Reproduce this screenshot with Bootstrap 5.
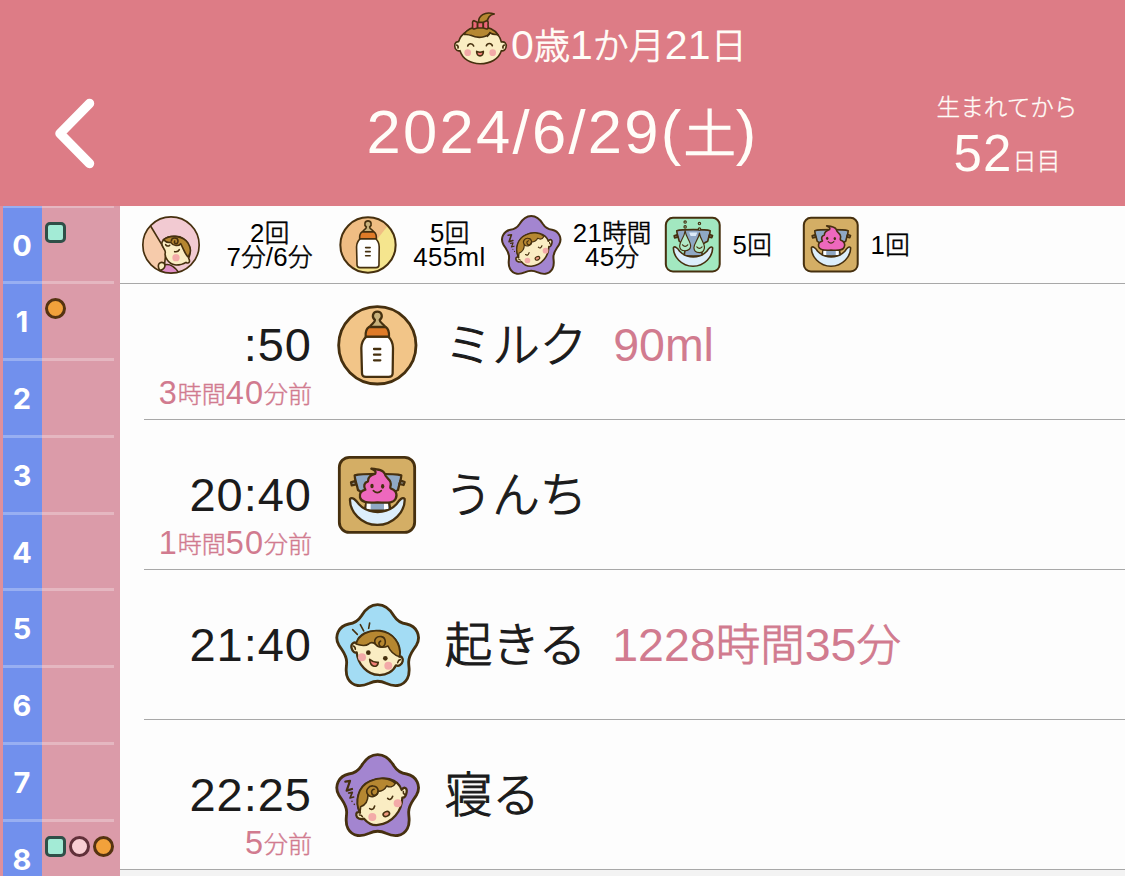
<!DOCTYPE html>
<html lang="ja">
<head>
<meta charset="utf-8">
<meta name="viewport" content="width=device-width, initial-scale=1">
<title>育児記録</title>
<link href="https://cdn.jsdelivr.net/npm/bootstrap@5.3.0/dist/css/bootstrap.min.css" rel="stylesheet">
<style>
  body{font-family:"Liberation Sans","Noto Sans CJK JP",sans-serif;font-weight:400;background:#f3f3f3;color:#1b1b1b;height:876px;overflow:hidden}
  .jp{font-family:"Noto Sans CJK JP",sans-serif;font-weight:300;line-height:0;letter-spacing:0;-webkit-text-stroke:.5px currentColor}
  .topbar{height:206px;background:#dd7c86;color:#fffdf8;z-index:2}
  .age-row{height:80px;padding:10px 0 0 74px}
  .age{font-size:41px;line-height:46px;letter-spacing:.1px;padding-top:12px;margin-left:2px}
  .age .jp{font-size:36px;-webkit-text-stroke-width:.8px}
  .date-row{display:grid;grid-template-columns:236px 1fr 236px;height:126px}
  .back{padding:17px 0 0 53px}
  .day{font-size:61.5px;line-height:62px;letter-spacing:2.3px;padding-top:21px}
  .day .jp{font-size:52px;-webkit-text-stroke-width:1.5px}
  .born{font-size:23.6px;line-height:26px;padding-top:13px}
  .born .jp{line-height:26px;-webkit-text-stroke-width:.3px}
  .born-days{font-size:51px;line-height:52px;letter-spacing:1.2px;margin-top:7px}
  .born-days .jp{font-size:24px;-webkit-text-stroke-width:.3px;position:relative;top:-1px}
  .body-row{height:670px}
  .rail{width:120px;background:#db9ba9;border-left:3px solid #df909c;overflow:hidden}
  .rail-in{margin-top:-1.5px}
  .hour{height:76.75px;background:linear-gradient(90deg,#7190ed 39px,transparent 39px)}
  .hour::before{content:"";display:block;width:111px;height:3px;background:rgba(255,255,255,.28)}
  .hour-num{width:38px;font:700 29px/76px Inter,sans-serif;color:#fff}
  .dots{padding:14px 0 0 4px;gap:3px}
  .mk{width:21px;height:21px;border:3px solid;border-radius:50%}
  .mk-g{background:#a3ebd6;border-color:#2f4f48;border-radius:5px}
  .mk-o{background:#f2a13b;border-color:#553311}
  .mk-p{background:#f9ced3;border-color:#613039}
  .log{background:#fdfdfd;overflow:hidden;height:664px}
  .summary{height:78px;border-bottom:1px solid #a8a8a8;background:#fdfdfd;z-index:1;color:#000}
  .sum{font-size:25.8px;line-height:24px;letter-spacing:.4px}
  .sum .jp{font-size:24.5px;-webkit-text-stroke-width:.6px}
  .lead-gap{margin-left:20px}
  .w-a{width:135px}.w-b{width:101px}.w-c{width:100px}.w-d{width:56px}
  .ic{display:block;flex:none}
  .ic-l{width:86.67px;height:86.67px}
  .ic-s{width:62px;height:62px}
  .entry{height:150px;position:relative}
  .entry::after{content:"";position:absolute;left:24px;right:0;bottom:0;height:1px;background:#a8a8a8}
  .entry:last-child::after{left:0}
  .entries{margin-top:-14px}
  .time-col{width:192px;padding-top:51px}
  .time{font-size:47px;line-height:48px;letter-spacing:1px}
  .ago{font-size:32.5px;line-height:33px;margin-top:8px;color:#d17b8f;letter-spacing:1px}
  .ago .jp{font-size:24px;-webkit-text-stroke-width:.4px;position:relative;top:-1px}
  .entry .ic{margin:32px 0 0 22px}
  .what{font-size:47.5px;line-height:48px;padding-top:52px;margin-left:24px}
  .what .jp{-webkit-text-stroke-width:1.1px}
  .amt{font-size:46.5px;line-height:48px;padding-top:51px;margin-left:26px;color:#d17b8f}
  .amt .jp{font-size:44.5px;-webkit-text-stroke-width:.9px}
  .o,.m{stroke:#46300f;stroke-width:8.5;stroke-linejoin:round;stroke-linecap:round}
  .m{stroke-width:6.8}
  .t{stroke:#46300f;stroke-width:4.8;stroke-linejoin:round;stroke-linecap:round}
  .nf{fill:none}
</style>
</head>
<body>
<svg width="0" height="0" class="position-absolute" aria-hidden="true">
  <defs>
    <path id="starShape" d="M145 28C170 28 184 45 194 62C204 78 216 84 232 86C262 92 276 122 262 148C250 168 238 178 238 200C238 218 244 232 234 250C220 276 192 274 170 264C152 255 138 255 120 264C98 274 70 276 56 250C46 232 52 218 52 200C52 178 40 168 28 148C14 122 28 92 58 86C74 84 86 78 96 62C106 45 120 28 145 28Z"/>
    <g id="bottleShape">
      <path class="m" fill="#c9b27c" d="M121 96C123 86 137 84 137 74C126 66 130 49 144 49C158 49 162 66 151 74C151 84 166 86 168 96Z"/>
      <path class="m" fill="#fff" d="M111 124C100 134 96 143 96 158L98 234C98 242 102 245 110 245H178C186 245 190 242 190 234L191 158C191 143 187 134 177 124Z"/>
      <path class="m" fill="#e07b28" d="M119 95H169C178 101 180 110 179 124H109C108 110 110 101 119 95Z"/>
      <path class="m nf" d="M134 161H153M134 178H153M134 195H153"/>
    </g>
    <symbol id="bottle" viewBox="14 20 260 260">
      <circle cx="144" cy="150" r="116" fill="#f2c588"/>
      <circle class="o nf" cx="144" cy="150" r="116"/><use href="#bottleShape"/>
    </symbol>
    <symbol id="bottleTwo" viewBox="14 20 260 260">
      <circle cx="144" cy="150" r="116" fill="#f0bd83"/>
      <path d="M228 68A117 117 0 0 1 84 250Z" fill="#f5e58e"/>
      <circle class="o nf" cx="144" cy="150" r="116"/><use href="#bottleShape"/>
    </symbol>
    <g id="seat">
      <path class="m" fill="#8fa8c4" d="M76 84C96 78 196 78 216 84C216 96 210 108 206 128C190 134 182 140 178 160L184 190H106L112 160C108 142 98 136 86 128C82 108 76 98 76 84Z"/>
      <path class="m" fill="#8d8a80" d="M65 105L77 101L80 111L67 114ZM226 104L214 100L210 110L223 113Z"/>
    </g>
    <path id="bowl" class="m" fill="#dceefb" d="M62 155C68 147 80 158 88 170C118 202 172 202 202 170C210 158 220 147 226 155C228 192 192 233 144 233C96 233 60 192 62 155Z"/>
    <symbol id="poop" viewBox="14 14 260 260">
      <rect class="o" x="30" y="30" width="226" height="225" rx="30" fill="#d4ae65"/>
      <use href="#seat"/>
      <path d="M112 168H124V186H112ZM164 168H176V186H164Z" fill="#fff"/>
      <use href="#bowl"/>
      <path class="m" fill="#ee68bd" d="M126 64C148 66 162 68 166 79C168 92 182 94 184 106C186 116 180 120 184 123C198 127 206 140 199 154C194 166 180 168 144 165C110 168 96 164 92 150C90 138 96 130 108 127C102 116 104 106 116 102C116 88 124 84 138 79C142 73 136 68 126 64Z"/>
      <ellipse cx="128" cy="116" rx="5" ry="7" fill="#46300f"/><ellipse cx="160" cy="117" rx="5" ry="7" fill="#46300f"/>
      <path class="t nf" d="M132 130Q144 142 156 130"/>
    </symbol>
    <symbol id="pee" viewBox="14 14 260 260">
      <rect class="o" x="30" y="30" width="226" height="225" rx="30" fill="#a2e8c0"/>
      <use href="#seat"/>
      <path d="M128 92H162L156 106H134Z" fill="#dcebf7"/><use href="#bowl"/>
      <path class="t" fill="#b2eac6" d="M111 84C114 112 136 130 134 150C132 164 122 168 111 168C98 168 88 162 88 148C88 130 108 112 111 84ZM171 94C174 120 194 136 192 156C190 170 182 176 171 176C158 176 148 170 148 156C148 136 168 120 171 94Z"/>
      <path class="t nf" d="M100 143Q111 156 122 143M160 152Q171 164 182 152"/>
      <g class="t" fill="#a2e8c0"><circle cx="111" cy="68" r="5"/><circle cx="111" cy="48" r="5"/><circle cx="171" cy="77" r="5"/><circle cx="171" cy="54" r="5"/></g>
    </symbol>
    <symbol id="wake" viewBox="14 20 260 260">
      <use href="#starShape" class="o" fill="#a3dcf4"/>
      <path class="t nf" d="M70 103L84 117M93 88L103 107M121 83L118 99"/>
      <path class="m" fill="#faedc3" d="M82 143C72 138 63 148 67 159C70 169 76 174 82 171C86 208 114 238 148 239C172 240 192 228 200 210C208 214 218 208 220 198C222 188 216 182 210 184C218 146 190 112 152 107C118 103 88 118 82 143Z"/>
      <path class="t" fill="#b68731" d="M80 146C88 120 118 102 152 107C190 112 216 142 211 184C196 180 184 172 176 152C164 158 146 158 138 146C132 142 124 140 118 146C104 156 92 148 80 146Z"/>
      <path class="t nf" d="M138 146C132 132 142 122 156 124C170 126 172 148 160 154C150 157 144 142 154 137"/>
      <circle cx="98" cy="186" r="12" fill="#f3aaa8"/><circle cx="177" cy="211" r="12" fill="#f3aaa8"/>
      <circle cx="117" cy="172" r="7" fill="#46300f"/><circle cx="168" cy="189" r="7" fill="#46300f"/>
      <path class="t" fill="#ef7e76" d="M121 192C128 198 138 202 147 201C145 219 123 217 121 192Z"/>
      <path class="t nf" d="M72 152Q78 154 78 162M213 193Q207 194 205 202"/>
    </symbol>
    <symbol id="sleep" viewBox="14 20 260 260">
      <use href="#starShape" class="o" fill="#a385d0"/>
      <path class="m nf" d="M48 109L62 107L52 136L68 131"/><path class="t nf" d="M58 143L69 141L62 158L73 155M68 168V168M75 177V177"/>
      <path class="m" fill="#faedc3" d="M217 134C224 122 234 128 232 140C230 152 226 158 219 157C218 196 190 234 146 239C128 241 114 232 104 220C92 224 82 218 81 210C80 202 84 198 92 202C76 168 86 124 122 108C162 90 206 100 217 134Z"/>
      <path class="t" fill="#b68731" d="M92 202C76 168 86 124 122 108C150 94 182 98 198 114C192 126 180 126 172 122C164 138 152 138 146 138C142 156 124 158 116 148C116 168 106 180 94 184Z"/>
      <path class="t nf" d="M116 148C106 136 118 120 132 122C150 124 150 146 138 150C126 152 122 134 134 132"/>
      <circle cx="205" cy="174" r="12" fill="#f3aaa8"/><circle cx="129" cy="215" r="12" fill="#f3aaa8"/>
      <path class="t nf" d="M175 159Q184 168 190 153M121 190Q132 197 136 182M90 209Q96 208 99 214M222 139Q221 145 226 147"/>
      <ellipse class="t" cx="171" cy="206" rx="10" ry="7" transform="rotate(-25 171 206)" fill="#ef9a80"/>
    </symbol>
    <symbol id="nurse" viewBox="30 27 186 186">
      <clipPath id="round"><circle cx="123" cy="120" r="85"/></clipPath>
      <g clip-path="url(#round)">
        <rect x="30" y="30" width="190" height="190" fill="#f2cad2"/>
        <path class="t" fill="#f6cbab" d="M60 60L108 140L100 210H20V60Z"/>
        <path class="t" fill="#df8fc6" d="M98 182C118 172 138 186 150 210H90Z"/>
        <path class="t" fill="#faedc3" d="M98 108C88 122 106 130 106 142C102 158 118 178 138 180C152 180 162 176 168 172C176 178 182 170 176 160C184 144 178 94 136 94C116 94 104 100 98 108ZM88 194C80 178 90 168 102 174C110 186 98 198 88 194Z"/>
        <path class="t" fill="#b68731" d="M100 104C122 88 160 92 174 114C184 130 182 146 174 156C164 146 160 130 152 116C146 124 130 124 122 112C114 114 106 110 100 104Z"/>
        <path class="t nf" d="M124 108C124 96 144 96 144 108C144 120 130 118 134 108M107 119Q112 126 119 121M134 140Q144 142 148 134"/>
        <circle cx="138" cy="158" r="11" fill="#f3aaa8"/>
      </g>
      <circle class="nf" cx="123" cy="120" r="84.500" stroke="#46300f" stroke-width="5"/>
    </symbol>
    <symbol id="girl" viewBox="36 30 170 170">
      <path class="t" fill="#b68731" d="M116 68C114 48 134 32 163 42C148 44 144 54 140 68C132 76 120 76 116 68Z"/>
      <path class="t" fill="#faedc3" d="M56 125C44 124 42 136 46 146C50 152 54 154 60 152C68 178 92 191 120 191C150 191 176 178 184 152C190 154 196 150 198 142C201 130 194 124 184 126C178 98 152 84 120 84C90 84 62 100 56 125Z"/>
      <path class="t" fill="#b68731" d="M72 103C88 74 152 72 174 104C160 104 154 102 150 98C144 110 118 118 92 106C88 104 82 104 72 103Z"/>
      <path class="t nf" d="M150 98Q147 106 142 109"/>
      <path class="t" fill="#eb6578" d="M102 62Q96 62 98 74Q96 88 102 87L112 84V67ZM140 62Q146 62 144 74Q146 88 140 87L130 84V67ZM113 67H129V84H113Z"/>
      <circle cx="83" cy="158" r="10" fill="#f3aaa8"/><circle cx="158" cy="158" r="10" fill="#f3aaa8"/>
      <path class="t nf" d="M83 138C86 129 98 129 101 138M139 137C142 128 154 128 157 137M50 135Q56 138 54 144M193 135Q187 138 189 144"/>
      <path class="t" fill="#ef7e76" d="M110 154Q120 159 130 154C132 172 108 172 110 154Z"/>
    </symbol>
  </defs>
</svg>

<header class="topbar position-relative">
  <div class="age-row d-flex justify-content-center">
    <svg class="ic" width="56.7" height="56.7"><use href="#girl"/></svg>
    <div class="age text-nowrap">0<span class="jp">歳</span>1<span class="jp">か月</span>21<span class="jp">日</span></div>
  </div>
  <div class="date-row">
    <div class="back"><svg class="ic" width="44" height="74" viewBox="0 0 44 74"><path d="M36.500 6.500L7 36.500L36.500 66.500" fill="none" stroke="#fff" stroke-width="9.500" stroke-linecap="round" stroke-linejoin="round"/></svg></div>
    <div class="day text-center text-nowrap">2024/6/29(<span class="jp">土</span>)</div>
    <div class="text-center text-nowrap">
      <div class="born"><span class="jp">生まれてから</span></div>
      <div class="born-days">52<span class="jp">日目</span></div>
    </div>
  </div>
</header>

<div class="body-row d-flex">
  <aside class="rail flex-shrink-0">
    <div class="rail-in">
      <div class="hour"><div class="d-flex"><div class="hour-num text-center">0</div><div class="dots d-flex"><span class="mk mk-g"></span></div></div></div>
      <div class="hour"><div class="d-flex"><div class="hour-num text-center">1</div><div class="dots d-flex"><span class="mk mk-o"></span></div></div></div>
      <div class="hour"><div class="hour-num text-center">2</div></div>
      <div class="hour"><div class="hour-num text-center">3</div></div>
      <div class="hour"><div class="hour-num text-center">4</div></div>
      <div class="hour"><div class="hour-num text-center">5</div></div>
      <div class="hour"><div class="hour-num text-center">6</div></div>
      <div class="hour"><div class="hour-num text-center">7</div></div>
      <div class="hour"><div class="d-flex"><div class="hour-num text-center">8</div><div class="dots d-flex"><span class="mk mk-g"></span><span class="mk mk-p"></span><span class="mk mk-o"></span></div></div></div>
    </div>
  </aside>

  <main class="log flex-grow-1">
    <div class="summary position-relative d-flex align-items-center text-center text-nowrap">
      <svg class="ic ic-s lead-gap"><use href="#nurse"/></svg>
      <div class="sum w-a">2<span class="jp">回</span><br>7<span class="jp">分</span>/6<span class="jp">分</span></div>
      <svg class="ic ic-s"><use href="#bottleTwo"/></svg>
      <div class="sum w-b">5<span class="jp">回</span><br>455ml</div>
      <svg class="ic ic-s"><use href="#sleep"/></svg>
      <div class="sum w-c">21<span class="jp">時間</span><br>45<span class="jp">分</span></div>
      <svg class="ic ic-s"><use href="#pee"/></svg>
      <div class="sum w-d">5<span class="jp">回</span></div>
      <svg class="ic ic-s lead-gap"><use href="#poop"/></svg>
      <div class="sum w-d">1<span class="jp">回</span></div>
    </div>

    <div class="entries">
      <div class="entry d-flex text-nowrap">
        <div class="time-col text-end"><div class="time">:50</div><div class="ago">3<span class="jp">時間</span>40<span class="jp">分前</span></div></div>
        <svg class="ic ic-l"><use href="#bottle"/></svg>
        <div class="what"><span class="jp">ミルク</span></div><div class="amt">90ml</div>
      </div>
      <div class="entry d-flex text-nowrap">
        <div class="time-col text-end"><div class="time">20:40</div><div class="ago">1<span class="jp">時間</span>50<span class="jp">分前</span></div></div>
        <svg class="ic ic-l"><use href="#poop"/></svg>
        <div class="what"><span class="jp">うんち</span></div>
      </div>
      <div class="entry d-flex text-nowrap">
        <div class="time-col text-end"><div class="time">21:40</div></div>
        <svg class="ic ic-l"><use href="#wake"/></svg>
        <div class="what"><span class="jp">起きる</span></div><div class="amt">1228<span class="jp">時間</span>35<span class="jp">分</span></div>
      </div>
      <div class="entry d-flex text-nowrap">
        <div class="time-col text-end"><div class="time">22:25</div><div class="ago">5<span class="jp">分前</span></div></div>
        <svg class="ic ic-l"><use href="#sleep"/></svg>
        <div class="what"><span class="jp">寝る</span></div>
      </div>
    </div>
  </main>
</div>
<script src="https://cdn.jsdelivr.net/npm/bootstrap@5.3.0/dist/js/bootstrap.bundle.min.js"></script>
</body>
</html>
